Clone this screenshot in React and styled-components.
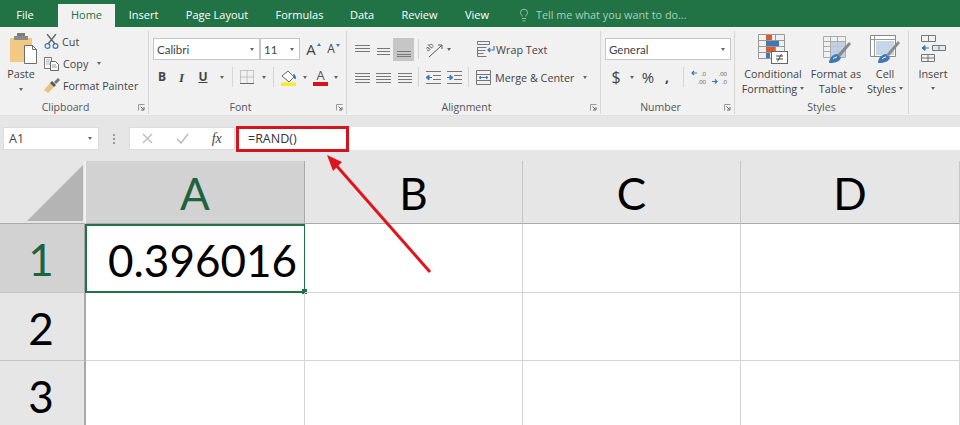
import React from "react";
import styled, { createGlobalStyle } from "styled-components";
import { Lightbulb } from "lucide-react";

const GlobalStyle = createGlobalStyle`
  html, body {
    margin: 0;
    padding: 0;
    background: #fff;
  }
  * {
    box-sizing: border-box;
  }
`;

const Window = styled.div`
  position: relative;
  width: 960px;
  height: 425px;
  overflow: hidden;
  font-family: "Open Sans", "Noto Sans", sans-serif;
  color: #444;
`;

/* tabs */
const TabBar = styled.div`
  display: flex;
  height: 27px;
  background: #217346;
  padding-top: 4px;
`;

const Tab = styled.div`
  width: ${(p) => p.$w}px;
  margin-right: ${(p) => p.$mr || 0}px;
  display: flex;
  align-items: center;
  justify-content: center;
  font-size: 11px;
  padding-bottom: 2px;
  color: ${(p) => (p.$active ? "#217346" : "#fff")};
  background: ${(p) => (p.$active ? "#f1f1f1" : "transparent")};
`;

const TellMe = styled.div`
  display: flex;
  align-items: center;
  gap: 5px;
  margin-left: 15px;
  padding-bottom: 2px;
  font-size: 10.8px;
  color: #a9d0ba;
`;

/* ribbon */
const Ribbon = styled.div`
  display: flex;
  height: 88px;
  background: #f1f1f1;
`;

const Group = styled.div`
  position: relative;
  width: ${(p) => p.$w}px;
  margin: 4px 0 1px;
  display: flex;
  flex-direction: column;
  border-right: ${(p) => (p.$last ? "none" : "1px solid #d6d6d6")};
`;

const GroupBody = styled.div`
  flex: 1;
  display: flex;
  min-height: 0;
  padding-left: ${(p) => p.$pl || 0}px;
  padding-top: ${(p) => p.$pt || 0}px;
`;

const GroupLabel = styled.div`
  height: 14px;
  line-height: 14px;
  font-size: 10.5px;
  text-align: center;
  color: #555;
  padding-right: ${(p) => p.$pr || 0}px;
`;

const Launcher = styled.svg`
  position: absolute;
  right: 3px;
  bottom: 3px;
  width: 7px;
  height: 7px;
`;

const Stack = styled.div`
  display: flex;
  flex-direction: column;
  margin-left: ${(p) => p.$ml || 0}px;
  margin-top: ${(p) => p.$mt || 0}px;
`;

const Row = styled.div`
  display: flex;
  align-items: center;
  height: 22px;
  margin-top: ${(p) => p.$mt || 0}px;
`;

const Slot = styled.div`
  display: flex;
  align-items: center;
  justify-content: center;
  flex: none;
  width: ${(p) => p.$w}px;
  height: ${(p) => (p.$on ? "23px" : "auto")};
  margin-left: ${(p) => p.$ml || 0}px;
  background: ${(p) => (p.$on ? "#c6c6c6" : "transparent")};
`;

const SmallText = styled.span`
  font-size: 10.8px;
  white-space: nowrap;
  margin-left: ${(p) => p.$ml || 0}px;
  color: #444;
`;

const Caret = styled.i`
  display: block;
  flex: none;
  width: 0;
  height: 0;
  margin-left: ${(p) => p.$ml || 0}px;
  border-left: 2.5px solid transparent;
  border-right: 2.5px solid transparent;
  border-top: 3px solid #666;
`;

const Sep = styled.i`
  display: block;
  flex: none;
  width: 1px;
  height: 20px;
  margin-left: ${(p) => p.$ml || 0}px;
  background: #d6d6d6;
`;

const Combo = styled.div`
  display: flex;
  align-items: center;
  justify-content: space-between;
  width: ${(p) => p.$w}px;
  height: 22px;
  padding: 0 5px 0 3px;
  background: #fff;
  border: 1px solid #c6c6c6;
  font-family: "Lato", "Open Sans", sans-serif;
  font-size: 11.5px;
  color: #444;
`;

const Glyph = styled.span`
  font-family: ${(p) => (p.$serif ? '"Liberation Serif", serif' : '"Open Sans", sans-serif')};
  font-size: ${(p) => p.$size || 12}px;
  font-weight: ${(p) => (p.$bold ? 700 : 400)};
  font-style: ${(p) => (p.$italic ? "italic" : "normal")};
  text-decoration: ${(p) => (p.$under ? "underline" : "none")};
  color: ${(p) => p.$color || "#444"};
  line-height: 1;
`;

/* the A over its colour bar */
const FontColor = styled.span`
  display: block;
  width: 15px;
  height: 17px;
  line-height: 13px;
  text-align: center;
  font-size: 13px;
  color: #555;
  border-bottom: 4px solid #d6141c;
`;

/* the A with the small triangle at its shoulder */
const SizeA = styled.span`
  display: flex;
  align-items: flex-start;
  gap: 1px;
  line-height: 1;
  font-size: ${(p) => p.$size}px;
  color: #444;
`;

const SizeMark = styled.i`
  display: block;
  margin-top: 1px;
  width: 0;
  height: 0;
  border-left: 2.5px solid transparent;
  border-right: 2.5px solid transparent;
  border-${(p) => (p.$up ? "bottom" : "top")}: 3px solid #3f79b5;
`;

const BigButton = styled.div`
  width: ${(p) => p.$w}px;
  flex: none;
  display: flex;
  flex-direction: column;
  align-items: center;
  padding-top: ${(p) => p.$pt || 3}px;
`;

const BigLabel = styled.div`
  display: flex;
  flex-direction: column;
  align-items: center;
  margin-top: ${(p) => p.$mt || 2}px;
  font-size: 10.8px;
  line-height: 15px;
  color: #444;
  white-space: nowrap;
`;

const LabelLine = styled.div`
  display: flex;
  align-items: center;
  gap: 3px;
  height: 15px;
`;

const LabelCaret = styled.div`
  margin-top: ${(p) => p.$mt || 6}px;
`;

const PasteArt = styled.svg`
  margin-left: 5px;
`;

const OrientArt = styled.svg`
  overflow: visible;
`;

const DecimalArt = styled.svg`
  overflow: visible;
`;

/* formula bar */
const FormulaBand = styled.div`
  display: flex;
  align-items: center;
  height: 46px;
  padding: 0 0 0 3px;
  background: #e6e6e6;
  border-top: 1px solid #e1e1e1;
`;

const NameBox = styled.div`
  display: flex;
  align-items: center;
  justify-content: space-between;
  width: 96px;
  height: 23px;
  padding: 0 6px 0 5px;
  background: #fff;
  border: 1px solid #dcdcdc;
  font-size: 12.5px;
  color: #444;
`;

const Dots = styled.div`
  display: flex;
  flex-direction: column;
  gap: 2px;
  margin: 0 14px 0 14px;
`;

const Dot = styled.i`
  display: block;
  width: 2px;
  height: 2px;
  background: #9a9a9a;
`;

const BarButtons = styled.div`
  display: flex;
  align-items: center;
  width: 106px;
  height: 23px;
  background: #fff;
  border: 1px solid #dcdcdc;
`;

const BarSlot = styled.div`
  width: 35px;
  display: flex;
  justify-content: center;
`;

const FormulaInput = styled.div`
  display: flex;
  align-items: center;
  flex: none;
  width: 113px;
  height: 26px;
  margin-left: 1px;
  padding-left: 9px;
  background: #fff;
  border: 3px solid #d4141c;
  font-size: 12.5px;
  color: #333;
`;

const FormulaRest = styled.div`
  flex: 1;
  height: 23px;
  background: #fff;
`;

/* sheet */
const Sheet = styled.div`
  display: grid;
  grid-template-columns: 86px 219px 218px 218px 219px;
  grid-template-rows: 63px 69px 68px 68px;
  background: #fff;
`;

const Corner = styled.div`
  display: flex;
  align-items: flex-end;
  justify-content: flex-end;
  padding: 0 1px 2px 0;
  background: #e6e6e6;
  border-right: 2px solid #f0f0f0;
  border-bottom: 1px solid #ababab;
`;

const ColHead = styled.div`
  display: flex;
  align-items: center;
  justify-content: center;
  padding-top: 2px;
  background: ${(p) => (p.$on ? "#d2d2d2" : "#e6e6e6")};
  border-right: 1px solid ${(p) => (p.$on ? "#ababab" : "#c6c6c6")};
  border-bottom: 1px solid #ababab;
  color: ${(p) => (p.$on ? "#1f6240" : "#000")};
  font-family: "Lato", "Open Sans", sans-serif;
  font-size: 44px;
`;

const RowHead = styled.div`
  display: flex;
  align-items: center;
  justify-content: center;
  padding: 2px 2px 0 0;
  background: ${(p) => (p.$on ? "#d2d2d2" : "#e6e6e6")};
  border-right: 2px solid #a8a8a8;
  border-bottom: 1px solid #c4c4c4;
  color: ${(p) => (p.$on ? "#1f6240" : "#000")};
  font-family: "Lato", "Open Sans", sans-serif;
  font-size: 44px;
`;

const Cell = styled.div`
  position: relative;
  display: flex;
  align-items: center;
  justify-content: flex-end;
  padding: 2px 8px 0 0;
  border-right: 1px solid #d4d4d4;
  border-bottom: 1px solid #d4d4d4;
  font-family: "Lato", "Open Sans", sans-serif;
  font-size: 44px;
  color: #000;
`;

const Selected = styled(Cell)`
  margin-left: -1px;
  border: 2px solid #217346;
  border-right-width: 1px;
  padding-right: 7px;
`;

const Handle = styled.i`
  position: absolute;
  right: -3px;
  bottom: -3px;
  width: 5px;
  height: 5px;
  background: #217346;
`;

const Arrow = styled.svg`
  position: absolute;
  left: 0;
  top: 0;
  width: 960px;
  height: 425px;
  pointer-events: none;
`;

/* drawings */
const LauncherIcon = () => (
  <Launcher viewBox="0 0 7 7">
    <path d="M.5 6.5V.5h6" fill="none" stroke="#999" />
    <path d="M2.5 2.5l3 3M6 3v3H3" fill="none" stroke="#666" />
  </Launcher>
);

const PasteIcon = () => (
  <PasteArt width="28" height="31" viewBox="0 0 28 31">
    <rect x="0" y="5" width="22" height="24" fill="#f1c982" />
    <rect x="7" y="0" width="8" height="4" fill="#7a7a7a" />
    <rect x="4" y="3" width="14" height="4" fill="#8a8a8a" />
    <path d="M14.5 12.5h8l4 4v14h-12z" fill="#fff" stroke="#6e6e6e" />
    <path d="M22.5 12.5v4h4" fill="none" stroke="#6e6e6e" />
  </PasteArt>
);

const CutIcon = () => (
  <svg width="15" height="15" viewBox="0 0 15 15">
    <path d="M3 0l8 10M12 0L4 10" fill="none" stroke="#666" strokeWidth="1.4" />
    <circle cx="3.5" cy="12" r="2.4" fill="none" stroke="#3f79b5" strokeWidth="1.2" />
    <circle cx="11.5" cy="12" r="2.4" fill="none" stroke="#3f79b5" strokeWidth="1.2" />
  </svg>
);

const CopyIcon = () => (
  <svg width="15" height="15" viewBox="0 0 15 15">
    <path d="M.5 1.5h7v11h-7z" fill="#fff" stroke="#777" />
    <path d="M2 4h4M2 6h4M2 8h4" stroke="#aaa" />
    <path d="M6.5 5.5h5l3 3v6h-8z" fill="#fff" stroke="#666" />
    <path d="M8 9h4M8 11h5" stroke="#999" />
  </svg>
);

const PainterIcon = () => (
  <svg width="16" height="15" viewBox="0 0 16 15">
    <path d="M0 12l6-7 4 4-6 6z" fill="#e9c27c" />
    <path d="M6 5l4 4 2-2-4-4z" fill="#555" />
    <path d="M10 4l4-4 2 2-4 4z" fill="#777" />
  </svg>
);

const BorderIcon = () => (
  <svg width="14" height="14" viewBox="0 0 14 14">
    <path
      d="M.5.5h13v13h-13zM7 .5v13M.5 7h13"
      fill="none"
      stroke="#999"
      strokeDasharray="1 1"
    />
    <path d="M0 13.5h14" stroke="#666" />
  </svg>
);

const FillIcon = () => (
  <svg width="16" height="17" viewBox="0 0 16 17">
    <path d="M1 7l6-5 6 6-5 5z" fill="#fff" stroke="#666" />
    <path d="M12 5c2 0 3 2 3 4s-2 1-2 0z" fill="#3f79b5" />
    <rect x="0" y="13.5" width="15" height="3.5" fill="#fbe92f" />
  </svg>
);

const Lines = ({ ys, w = 15 }) => (
  <svg width={w} height="15" viewBox={`0 0 ${w} 15`}>
    {ys.map((y) => (
      <path key={y} d={`M0 ${y + 0.5}H${w}`} stroke="#777" />
    ))}
  </svg>
);

const OrientIcon = () => (
  <OrientArt width="17" height="17" viewBox="0 0 17 17">
    <text
      x="2"
      y="11"
      fontSize="7.5"
      fontFamily="Open Sans"
      fill="#555"
      transform="rotate(-45 2 11)"
    >
      ab
    </text>
    <path d="M3 16L15 5" stroke="#555" />
    <path d="M12 4h4v4" fill="none" stroke="#555" />
  </OrientArt>
);

const WrapIcon = () => (
  <svg width="18" height="16" viewBox="0 0 18 16">
    <path d="M.5.5h12v3H.5zM.5 6.5h9M.5 9.5h8M.5 12.5h6" fill="none" stroke="#777" />
    <path d="M.5 6v9.5h9" fill="none" stroke="#777" />
    <path d="M17 5v4h-6M13 7l-2 2 2 2" fill="none" stroke="#3f79b5" strokeWidth="1.2" />
  </svg>
);

const MergeIcon = () => (
  <svg width="15" height="15" viewBox="0 0 15 15">
    <path d="M.5.5h14v14H.5zM.5 4.5h14M.5 10.5h14" fill="none" stroke="#777" />
    <path d="M3 7.5h9M5 6L3 7.5 5 9M10 6l2 1.5L10 9" fill="none" stroke="#3f79b5" />
  </svg>
);

const IndentIcon = ({ flip }) => (
  <svg width="15" height="13" viewBox="0 0 15 13">
    <path d="M0 .5h15M7 4.5h8M7 8.5h8M0 12.5h15" stroke="#777" />
    {flip ? (
      <path d="M0 6.5h5M3 4l3 2.5L3 9z" fill="#3f79b5" stroke="#3f79b5" />
    ) : (
      <path d="M6 6.5H1M3 4L0 6.5 3 9z" fill="#3f79b5" stroke="#3f79b5" />
    )}
  </svg>
);

const DecimalIcon = ({ more }) => (
  <DecimalArt width="15" height="17" viewBox="0 0 15 17">
    <text x="15" y="6.5" textAnchor="end" fontSize="6" fontFamily="Open Sans" fill="#555">
      {more ? ".00" : ".0"}
    </text>
    <text x="15" y="15" textAnchor="end" fontSize="6" fontFamily="Open Sans" fill="#555">
      {more ? ".0" : ".00"}
    </text>
    {more ? (
      <path d="M0 12.5h5M3 10.5l2 2-2 2" fill="none" stroke="#3f79b5" strokeWidth="1.2" />
    ) : (
      <path d="M6 4H1M3 2L1 4l2 2" fill="none" stroke="#3f79b5" strokeWidth="1.2" />
    )}
  </DecimalArt>
);

const ConditionalIcon = () => (
  <svg width="30" height="30" viewBox="0 0 30 30">
    <path
      d="M.5.5h26v24H.5zM8.5.5v24M17.5.5v24M.5 6.5h26M.5 12.5h26M.5 18.5h26"
      fill="none"
      stroke="#999"
    />
    <rect x="8" y="1" width="6" height="5" fill="#d95c2c" />
    <rect x="8" y="7" width="13" height="5" fill="#3f79b5" />
    <rect x="8" y="13" width="9" height="5" fill="#d95c2c" />
    <rect x="8" y="19" width="4" height="5" fill="#3f79b5" />
    <rect x="13.5" y="17.5" width="16" height="12" fill="#fff" stroke="#666" />
    <path d="M18 22h7M18 25h7M23.5 20l-4 7.5" stroke="#444" />
  </svg>
);

const TableIcon = () => (
  <svg width="29" height="28" viewBox="0 0 29 28">
    <path
      d="M1.5.5h22v21h-22zM1.5 5.5h22M1.5 10.5h22M1.5 15.5h22M8.5.5v21M15.5.5v21"
      fill="none"
      stroke="#aaa"
    />
    <rect x="9" y="6" width="14" height="15" fill="#b9cde3" opacity=".85" />
    <path d="M15 19L27 6l2 2-11 13z" fill="#8a8a8a" />
    <path d="M7 27c0-5 4-9 8-9l4 4c-1 3-5 5-12 5z" fill="#3f79b5" />
    <path d="M11 23c1-1 3-2 4-2" stroke="#fff" />
  </svg>
);

const StylesIcon = () => (
  <svg width="30" height="29" viewBox="0 0 30 29">
    <path d="M.5.5h25v21H.5z" fill="#fff" stroke="#888" />
    <path d="M.5 4.5h25M4.5.5v21" fill="none" stroke="#999" />
    <rect x="6" y="6" width="18" height="14" fill="#c3d6ea" />
    <path d="M16 20L28 6l2 2-11 13z" fill="#8a8a8a" />
    <path d="M8 28c0-5 4-9 8-9l4 4c-1 3-5 5-12 5z" fill="#3f79b5" />
    <path d="M12 24c1-1 3-2 4-2" stroke="#fff" />
  </svg>
);

const InsertIcon = () => (
  <svg width="26" height="27" viewBox="0 0 26 27">
    <path d="M1.5.5h14v6h-14zM8.5.5v6" fill="none" stroke="#777" />
    <path d="M12.5 10.5h13v5h-13zM19 10.5v5" fill="#dfe7f0" stroke="#777" />
    <path d="M9 13H2M5 10.5L2 13l3 2.5z" fill="#3f79b5" stroke="#3f79b5" />
    <path d="M1.5 19.5h13v7h-13zM8 19.5v7M1.5 23h13" fill="none" stroke="#777" />
  </svg>
);

const FxIcon = () => (
  <Glyph $serif $italic $size={14}>
    fx
  </Glyph>
);

export default function App() {
  return (
    <Window>
      <GlobalStyle />
      <TabBar>
        <Tab $w={50} $mr={8}>File</Tab>
        <Tab $w={57} $active>Home</Tab>
        <Tab $w={57}>Insert</Tab>
        <Tab $w={90}>Page Layout</Tab>
        <Tab $w={75}>Formulas</Tab>
        <Tab $w={50}>Data</Tab>
        <Tab $w={65}>Review</Tab>
        <Tab $w={50}>View</Tab>
        <TellMe>
          <Lightbulb size={14} strokeWidth={1.2} color="#c4dfd0" />
          Tell me what you want to do...
        </TellMe>
      </TabBar>

      <Ribbon>
        <Group $w={149}>
          <GroupBody>
            <BigButton $w={42} $pt={2}>
              <PasteIcon />
              <BigLabel>Paste</BigLabel>
              <LabelCaret $mt={7}><Caret /></LabelCaret>
            </BigButton>
            <Stack $ml={2} $mt={-1}>
              <Row>
                <CutIcon />
                <SmallText $ml={3}>Cut</SmallText>
              </Row>
              <Row>
                <CopyIcon />
                <SmallText $ml={4}>Copy</SmallText>
                <Caret $ml={9} />
              </Row>
              <Row>
                <PainterIcon />
                <SmallText $ml={3}>Format Painter</SmallText>
              </Row>
            </Stack>
          </GroupBody>
          <GroupLabel $pr={17}>Clipboard</GroupLabel>
          <LauncherIcon />
        </Group>

        <Group $w={198}>
          <GroupBody $pl={4} $pt={7}>
            <Stack>
              <Row>
                <Combo $w={107}>Calibri<Caret /></Combo>
                <Combo $w={40}>11<Caret /></Combo>
                <Slot $w={19} $ml={4}>
                  <SizeA $size={15}>A<SizeMark $up /></SizeA>
                </Slot>
                <Slot $w={17} $ml={2}>
                  <SizeA $size={12}>A<SizeMark /></SizeA>
                </Slot>
              </Row>
              <Row $mt={6}>
                <Slot $w={18}><Glyph $bold>B</Glyph></Slot>
                <Slot $w={21}><Glyph $italic $serif $bold $size={13}>I</Glyph></Slot>
                <Slot $w={22}><Glyph $under $bold>U</Glyph></Slot>
                <Caret $ml={6} />
                <Sep $ml={8} />
                <Slot $w={14} $ml={7}><BorderIcon /></Slot>
                <Caret $ml={8} />
                <Sep $ml={7} />
                <Slot $w={16} $ml={7}><FillIcon /></Slot>
                <Caret $ml={6} />
                <Slot $w={15} $ml={6}><FontColor>A</FontColor></Slot>
                <Caret $ml={6} />
              </Row>
            </Stack>
          </GroupBody>
          <GroupLabel $pr={14}>Font</GroupLabel>
          <LauncherIcon />
        </Group>

        <Group $w={254}>
          <GroupBody $pl={7} $pt={7}>
            <Stack>
              <Row>
                <Slot $w={16}><Lines ys={[3, 6, 9]} /></Slot>
                <Slot $w={15} $ml={6}><Lines ys={[6, 9, 12]} w={13} /></Slot>
                <Slot $w={21} $ml={2} $on><Lines ys={[9, 12, 14]} w={14} /></Slot>
                <Sep $ml={4} />
                <Slot $w={17} $ml={7}><OrientIcon /></Slot>
                <Caret $ml={4} />
                <Slot $w={18} $ml={26}><WrapIcon /></Slot>
                <SmallText $ml={1}>Wrap Text</SmallText>
              </Row>
              <Row $mt={6}>
                <Slot $w={16}><Lines ys={[3, 6, 9, 12]} /></Slot>
                <Slot $w={15} $ml={6}><Lines ys={[3, 6, 9, 12]} /></Slot>
                <Slot $w={15} $ml={6}><Lines ys={[3, 6, 9, 12]} w={14} /></Slot>
                <Sep $ml={6} />
                <Slot $w={15} $ml={7}><IndentIcon /></Slot>
                <Slot $w={15} $ml={6}><IndentIcon flip /></Slot>
                <Sep $ml={6} />
                <Slot $w={15} $ml={7}><MergeIcon /></Slot>
                <SmallText $ml={4}>Merge &amp; Center</SmallText>
                <Caret $ml={9} />
              </Row>
            </Stack>
          </GroupBody>
          <GroupLabel $pr={14}>Alignment</GroupLabel>
          <LauncherIcon />
        </Group>

        <Group $w={134}>
          <GroupBody $pl={4} $pt={7}>
            <Stack>
              <Row>
                <Combo $w={126}>General<Caret /></Combo>
              </Row>
              <Row $mt={6}>
                <Slot $w={12} $ml={5}><Glyph $size={16}>$</Glyph></Slot>
                <Caret $ml={8} />
                <Slot $w={14} $ml={7}><Glyph $size={15}>%</Glyph></Slot>
                <Slot $w={6} $ml={9}><Glyph $size={14} $bold>,</Glyph></Slot>
                <Sep $ml={13} />
                <Slot $w={15} $ml={7}><DecimalIcon /></Slot>
                <Slot $w={15} $ml={6}><DecimalIcon more /></Slot>
              </Row>
            </Stack>
          </GroupBody>
          <GroupLabel $pr={14}>Number</GroupLabel>
          <LauncherIcon />
        </Group>

        <Group $w={174}>
          <GroupBody $pl={6}>
            <BigButton $w={64}>
              <ConditionalIcon />
              <BigLabel>
                <LabelLine>Conditional</LabelLine>
                <LabelLine>Formatting<Caret /></LabelLine>
              </BigLabel>
            </BigButton>
            <BigButton $w={62} $pt={5}>
              <TableIcon />
              <BigLabel>
                <LabelLine>Format as</LabelLine>
                <LabelLine>Table<Caret /></LabelLine>
              </BigLabel>
            </BigButton>
            <BigButton $w={36} $pt={4}>
              <StylesIcon />
              <BigLabel>
                <LabelLine>Cell</LabelLine>
                <LabelLine>Styles<Caret /></LabelLine>
              </BigLabel>
            </BigButton>
          </GroupBody>
          <GroupLabel>Styles</GroupLabel>
        </Group>

        <Group $w={51} $last>
          <GroupBody $pl={2}>
            <BigButton $w={44} $pt={4}>
              <InsertIcon />
              <BigLabel $mt={4}>
                <LabelLine>Insert</LabelLine>
                <LabelCaret><Caret /></LabelCaret>
              </BigLabel>
            </BigButton>
          </GroupBody>
        </Group>
      </Ribbon>

      <FormulaBand>
        <NameBox>
          A1
          <Caret />
        </NameBox>
        <Dots>
          <Dot />
          <Dot />
          <Dot />
        </Dots>
        <BarButtons>
          <BarSlot>
            <svg width="11" height="11" viewBox="0 0 11 11">
              <path d="M1 1l9 9M10 1l-9 9" stroke="#bdbdbd" strokeWidth="1.4" />
            </svg>
          </BarSlot>
          <BarSlot>
            <svg width="13" height="11" viewBox="0 0 13 11">
              <path d="M1 6l4 4 7-9" fill="none" stroke="#bdbdbd" strokeWidth="1.6" />
            </svg>
          </BarSlot>
          <BarSlot><FxIcon /></BarSlot>
        </BarButtons>
        <FormulaInput>=RAND()</FormulaInput>
        <FormulaRest />
      </FormulaBand>

      <Sheet>
        <Corner>
          <svg width="56" height="56" viewBox="0 0 56 56">
            <path d="M0 56L56 0v56z" fill="#b4b4b4" />
          </svg>
        </Corner>
        <ColHead $on>A</ColHead>
        <ColHead>B</ColHead>
        <ColHead>C</ColHead>
        <ColHead>D</ColHead>

        <RowHead $on>1</RowHead>
        <Selected>
          0.396016
          <Handle />
        </Selected>
        <Cell />
        <Cell />
        <Cell />

        <RowHead>2</RowHead>
        <Cell />
        <Cell />
        <Cell />
        <Cell />

        <RowHead>3</RowHead>
        <Cell />
        <Cell />
        <Cell />
        <Cell />
      </Sheet>

      <Arrow viewBox="0 0 960 425">
        <path d="M430 272L335 164" stroke="#e0141c" strokeWidth="3" fill="none" />
        <path d="M327 155l15 7-9 9z" fill="#e0141c" />
      </Arrow>
    </Window>
  );
}
